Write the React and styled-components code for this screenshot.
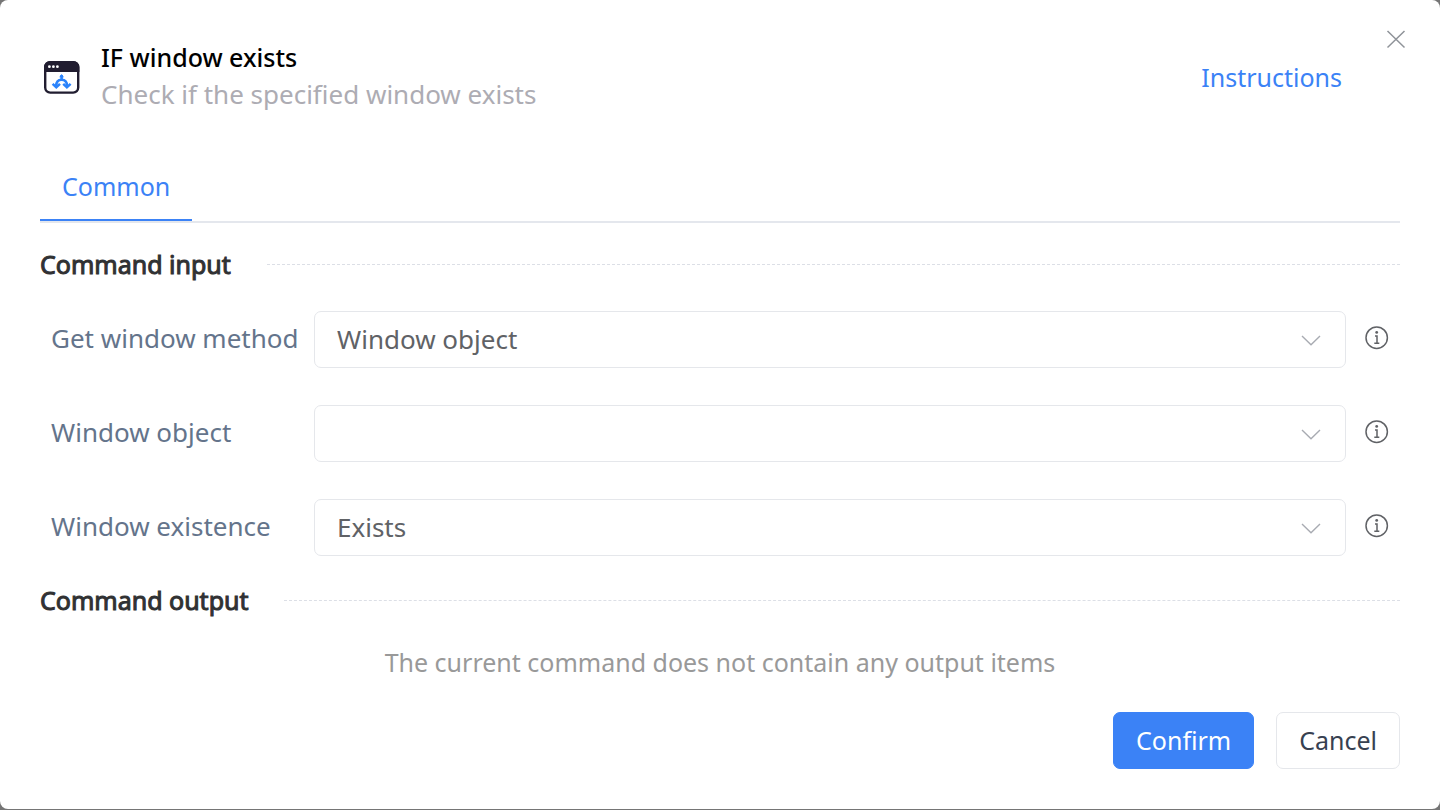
import React from "react";
import styled, { createGlobalStyle } from "styled-components";

const GlobalStyle = createGlobalStyle`
  *, *::before, *::after { box-sizing: border-box; }
  body {
    margin: 0;
    background: #757575;
    font-family: "Noto Sans", "Open Sans", sans-serif;
    font-size: 26px;
    line-height: 36px;
  }
  button, select { font: inherit; }
`;

const Dialog = styled.main`
  position: relative;
  display: flex;
  flex-direction: column;
  min-height: calc(100vh - 1px);
  padding: 40px;
  background: #fff;
  border-radius: 8px;
`;

const Header = styled.header`
  display: flex;
  align-items: center;
  padding: 0 58px 0 4px;
`;

const HeaderText = styled.div`
  flex: 1;
  margin-left: 21px;
`;

const Title = styled.h1`
  margin: 0;
  font-size: 25px;
  font-weight: 500;
  line-height: 34px;
  color: #000;
`;

const Subtitle = styled.p`
  margin: 0;
  line-height: 40px;
  color: #adacb3;
`;

const HelpLink = styled.a`
  font-size: 25px;
  color: #3b82f6;
  text-decoration: none;
`;

const CloseButton = styled.button`
  position: absolute;
  top: 26px;
  right: 31px;
  display: flex;
  padding: 0;
  border: 0;
  background: none;
  color: #8f9399;
  cursor: pointer;
`;

const Tabs = styled.div`
  display: flex;
  height: 70px;
  margin-top: 39px;
  border-bottom: 2px solid #e4e7ed;
`;

const Tab = styled.button`
  padding: 0 22px;
  border: 0;
  border-bottom: 2px solid ${(p) => (p.$active ? "#3b82f6" : "transparent")};
  background: none;
  font-size: 25px;
  color: ${(p) => (p.$active ? "#3b82f6" : "#303133")};
  cursor: pointer;
`;

const SectionHeading = styled.div`
  display: flex;
  align-items: center;
  gap: 36px;
  margin-top: ${(p) => p.$gap}px;

  &::after {
    content: "";
    flex: 1;
    border-top: 1px dashed #dcdfe6;
  }
`;

const SectionTitle = styled.h2`
  margin: 0;
  font-size: 25px;
  font-weight: 400;
  line-height: 36px;
  color: #303133;
  -webkit-text-stroke: 1px #303133;
`;

const Fields = styled.div`
  display: grid;
  gap: 37px;
  margin-top: 29px;
`;

const Field = styled.div`
  display: grid;
  grid-template-columns: 263px 1fr 24px;
  align-items: center;
  padding: 0 11px;
`;

const Label = styled.label`
  padding-bottom: 4px;
  color: #64748b;
`;

const SelectBox = styled.div`
  position: relative;
  margin-right: 19px;
  color: #a8abb2;

  svg {
    position: absolute;
    top: 24px;
    right: 25px;
    pointer-events: none;
  }
`;

const Select = styled.select`
  display: block;
  width: 100%;
  height: 57px;
  padding: 0 60px 2px 22px;
  appearance: none;
  border: 1px solid #e5e7eb;
  border-radius: 7px;
  background: #fff;
  color: #606266;
`;

const InfoButton = styled.button`
  display: flex;
  padding: 0 0 4px;
  border: 0;
  background: none;
  color: #606266;
  cursor: pointer;
`;

const EmptyText = styled.p`
  margin: 26px 0 0;
  font-size: 25px;
  text-align: center;
  color: #999;
`;

const Footer = styled.footer`
  display: flex;
  justify-content: flex-end;
  gap: 22px;
  margin-top: auto;
`;

const Button = styled.button`
  height: 57px;
  padding: 0 22px 2px;
  border: 1px solid ${(p) => (p.$primary ? "#3b82f6" : "#e5e7eb")};
  border-radius: 7px;
  background: ${(p) => (p.$primary ? "#3b82f6" : "#fff")};
  font-size: 25px;
  color: ${(p) => (p.$primary ? "#fff" : "#374151")};
  cursor: pointer;
`;

const WindowIcon = () => (
  <svg width="36" height="33" viewBox="0 0 36 33" fill="none" aria-hidden="true">
    <rect x="1.2" y="1.2" width="33" height="30.4" rx="5" stroke="#211d30" strokeWidth="2.4" />
    <path d="M0 11V6a6 6 0 0 1 6-6h23.400a6 6 0 0 1 6 6v5z" fill="#211d30" />
    <g fill="#fff">
      <circle cx="5.4" cy="5.7" r="1.4" />
      <circle cx="9.4" cy="5.7" r="1.4" />
      <circle cx="13.4" cy="5.7" r="1.4" />
    </g>
    <path d="M17.600 14v4.500M12.200 26v-1c0-3.800 2-6.300 5.400-6.300s5.400 2.500 5.400 6.300v1" stroke="#2b83fb" strokeWidth="2.600" />
    <path d="M17.600 13l2.400 3.200h-4.800z" fill="#2b83fb" />
    <path d="M8.600 22.800l3.700 3.400 3.700-3.400M19.200 22.800l3.700 3.400 3.700-3.400" stroke="#2b83fb" strokeWidth="2.500" />
  </svg>
);

const CloseIcon = () => (
  <svg width="26" height="26" viewBox="0 0 26 26" fill="none" aria-hidden="true">
    <path d="M4.500 5l17 16.500M21.500 5l-17 16.500" stroke="currentColor" strokeWidth="1.500" />
  </svg>
);

const ChevronIcon = () => (
  <svg width="20" height="12" viewBox="0 0 20 12" fill="none" aria-hidden="true">
    <path d="M1 1l9 8.700L19 1" stroke="currentColor" strokeWidth="1.400" />
  </svg>
);

const InfoIcon = () => (
  <svg width="24" height="24" viewBox="0 0 24 24" fill="none" stroke="currentColor" aria-hidden="true">
    <circle cx="11.700" cy="11.700" r="10.700" strokeWidth="1.500" />
    <path d="M10 10h2v7M9.300 17.200h5" strokeWidth="1.500" />
    <circle cx="11.700" cy="6.400" r="1.400" fill="currentColor" stroke="none" />
  </svg>
);

const fields = [
  { id: "method", label: "Get window method", options: ["Window object"] },
  { id: "object", label: "Window object", options: [""] },
  { id: "existence", label: "Window existence", options: ["Exists"] },
];

export default function App() {
  return (
    <>
      <GlobalStyle />
      <Dialog>
        <CloseButton type="button" aria-label="Close">
          <CloseIcon />
        </CloseButton>
        <Header>
          <WindowIcon />
          <HeaderText>
            <Title>IF window exists</Title>
            <Subtitle>Check if the specified window exists</Subtitle>
          </HeaderText>
          <HelpLink href="#instructions">Instructions</HelpLink>
        </Header>
        <Tabs role="tablist">
          <Tab type="button" role="tab" aria-selected="true" $active>
            Common
          </Tab>
        </Tabs>
        <SectionHeading $gap={23}>
          <SectionTitle>Command input</SectionTitle>
        </SectionHeading>
        <Fields>
          {fields.map((field) => (
            <Field key={field.id}>
              <Label htmlFor={field.id}>{field.label}</Label>
              <SelectBox>
                <Select id={field.id}>
                  {field.options.map((option) => (
                    <option key={option} value={option}>
                      {option}
                    </option>
                  ))}
                </Select>
                <ChevronIcon />
              </SelectBox>
              <InfoButton type="button" aria-label={`About ${field.label}`}>
                <InfoIcon />
              </InfoButton>
            </Field>
          ))}
        </Fields>
        <SectionHeading $gap={26}>
          <SectionTitle>Command output</SectionTitle>
        </SectionHeading>
        <EmptyText>The current command does not contain any output items</EmptyText>
        <Footer>
          <Button type="button" $primary>
            Confirm
          </Button>
          <Button type="button">Cancel</Button>
        </Footer>
      </Dialog>
    </>
  );
}
